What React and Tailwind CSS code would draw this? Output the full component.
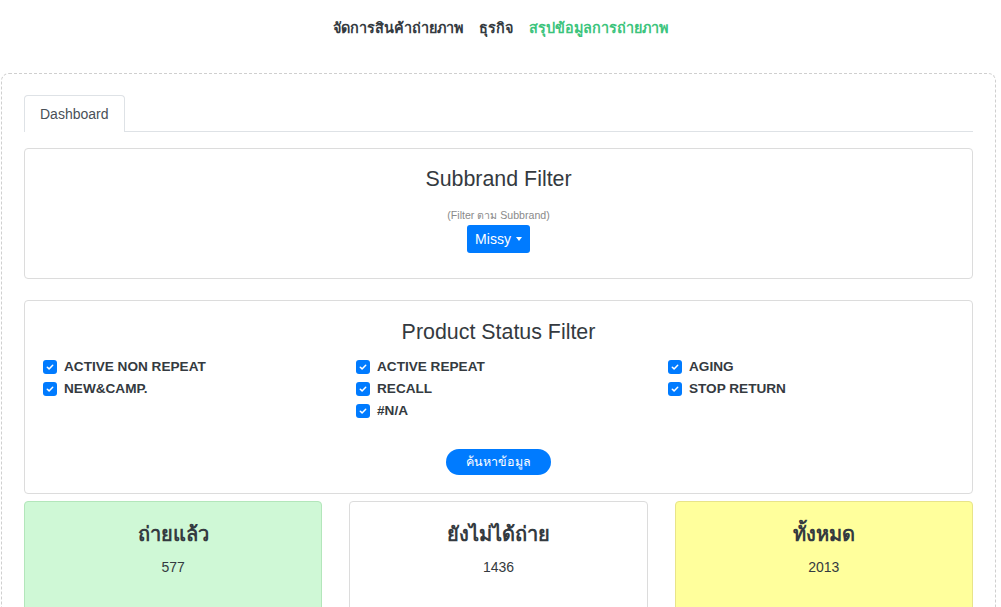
import React from 'react';

const statuses = [
  ['ACTIVE NON REPEAT', 'NEW&CAMP.'],
  ['ACTIVE REPEAT', 'RECALL', '#N/A'],
  ['AGING', 'STOP RETURN'],
];

const stats = [
  { label: 'ถ่ายแล้ว', value: 577, cls: 'bg-[#cff8d6] border-[#b3e6bb]' },
  { label: 'ยังไม่ได้ถ่าย', value: 1436, cls: 'bg-white border-[#dcdcdc]' },
  { label: 'ทั้งหมด', value: 2013, cls: 'bg-[#ffff9c] border-[#e8e48a]' },
];

const Check = ({ label }) => (
  <label className="flex items-center h-[22px]">
    <span className="w-[14px] h-[14px] rounded-[3px] bg-[#007bff] flex items-center justify-center mr-[7px]">
      <svg width="8" height="8" viewBox="0 0 8 8">
        <path d="M1.3 4.2 L3.1 5.9 L6.7 2.2" stroke="white" strokeWidth="1.5" fill="none" strokeLinecap="round" strokeLinejoin="round" />
      </svg>
    </span>
    <span className="text-[13.6px] font-bold text-[#343a40]">{label}</span>
  </label>
);

export default function App() {
  return (
    <div className="min-h-[607px] bg-white text-[#343a40]" style={{ fontFamily: '"Liberation Sans", Arial, "Noto Sans", sans-serif' }}>
      <nav className="flex justify-center gap-[16px] pt-[18px] h-[73px] text-[14.4px] font-bold">
        <span className="text-[#343a40]">จัดการสินค้าถ่ายภาพ</span>
        <span className="text-[#343a40]">ธุรกิจ</span>
        <span className="text-[#3cc47c]">สรุปข้อมูลการถ่ายภาพ</span>
      </nav>

      <div className="ml-[1px] w-[995px] border border-dashed border-[#cfcfcf] rounded-[8px] px-[22px] pt-[21px] pb-4">
        <div className="flex border-b border-[#dee2e6]">
          <div className="px-[15px] h-[37px] flex items-center text-[14px] text-[#495057] border border-b-0 border-[#dee2e6] rounded-t-[4px] -mb-px bg-white">
            Dashboard
          </div>
        </div>

        <div className="mt-[16px] border border-[#dcdcdc] rounded-[4px] h-[131px] flex flex-col items-center pt-[17px]">
          <div className="text-[21.4px] leading-[26px]">Subbrand Filter</div>
          <div className="text-[10.6px] text-[#8a8a8a] mt-[17px] leading-[12px]">(Filter ตาม Subbrand)</div>
          <button className="mt-[4px] h-[28px] px-[8px] bg-[#007bff] text-white text-[14px] rounded-[3px] flex items-center gap-[5px]">
            Missy
            <span className="w-0 h-0 border-x-[3.5px] border-x-transparent border-t-[4px] border-t-white" />
          </button>
        </div>

        <div className="mt-[21px] border border-[#dcdcdc] rounded-[4px] h-[194px] pl-[18px] pt-[18px]">
          <div className="text-[21.4px] leading-[26px] text-center pr-[18px]">Product Status Filter</div>
          <div className="grid grid-cols-[313px_312px_1fr] mt-[11px]">
            {statuses.map((col, i) => (
              <div key={i} className="flex flex-col">
                {col.map(s => <Check key={s} label={s} />)}
              </div>
            ))}
          </div>
          <div className="flex justify-center mt-[27px] pr-[18px]">
            <button className="h-[26px] w-[105px] rounded-full bg-[#007bff] text-white text-[12.5px]">ค้นหาข้อมูล</button>
          </div>
        </div>

        <div className="mt-[7px] grid grid-cols-3 gap-[27px]">
          {stats.map(s => (
            <div key={s.label} className={`border rounded-[4px] h-[140px] flex flex-col items-center pt-[19px] ${s.cls}`}>
              <div className="text-[20px] font-bold leading-[26px]">{s.label}</div>
              <div className="text-[14px] mt-[10px]">{s.value}</div>
            </div>
          ))}
        </div>
      </div>
    </div>
  );
}
